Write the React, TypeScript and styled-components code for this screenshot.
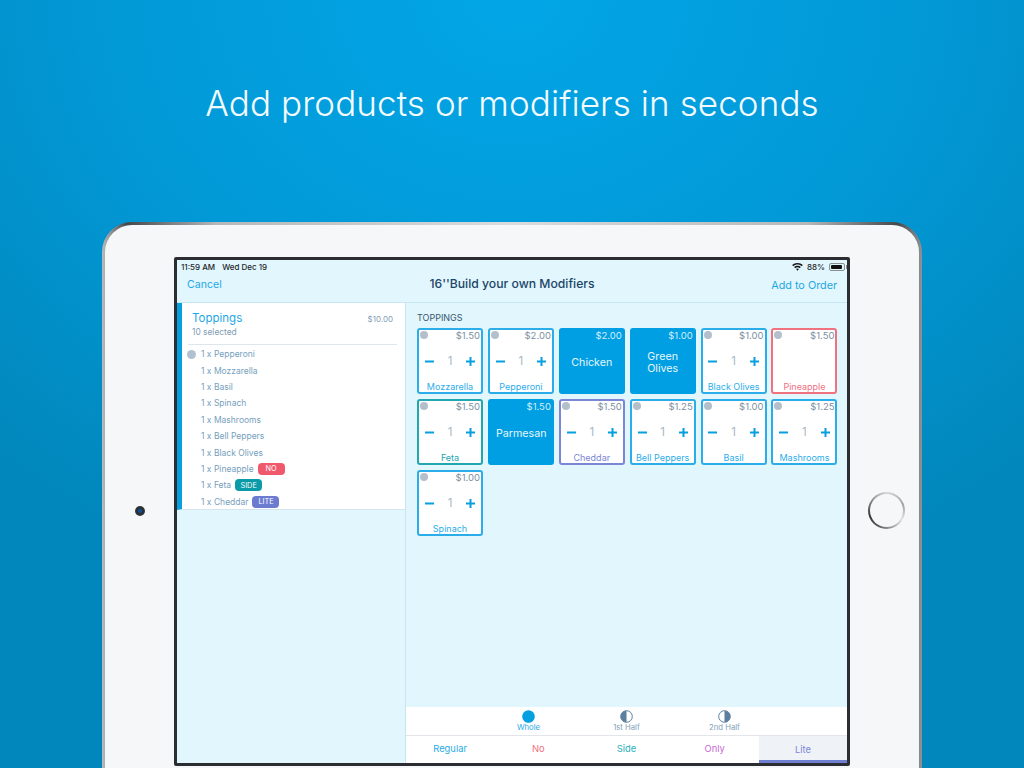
import React from 'react';
import styled, { createGlobalStyle } from 'styled-components';

const GlobalStyle = createGlobalStyle`
  html, body {
    margin: 0;
    padding: 0;
    height: 768px;
    overflow: hidden;
    font-family: Inter, "Liberation Sans", sans-serif;
  }
  * { box-sizing: border-box; }
`;

const Page = styled.div`
  width: 1024px;
  height: 768px;
  overflow: hidden;
  background: radial-gradient(ellipse 760px 620px at 50% 0, #02a6e6 0%, #0298d6 55%, #0187bb 100%);
`;

const Headline = styled.h1`
  margin: 0;
  height: 222px;
  padding-top: 80px;
  text-align: center;
  font-family: Inter, sans-serif;
  font-size: 35px;
  line-height: 46px;
  font-weight: 300;
  letter-spacing: 0.09px;
  color: #f4fbff;
`;

const DeviceEdge = styled.div`
  width: 820px;
  height: 560px;
  margin: 0 auto;
  padding: 3px 3px 0;
  border-radius: 30px 30px 0 0;
  background: linear-gradient(90deg, #b9bcbf 0, #45484b 3%, #b5b7b9 14%, #d9dbdd 50%, #b5b7b9 86%, #45484b 97%, #8f9295 100%);
`;

const DeviceBody = styled.div`
  height: 100%;
  display: grid;
  grid-template-columns: 69px 676px 69px;
  padding-top: 32px;
  border-radius: 27px 27px 0 0;
  background: #f6f7f9;
`;

const BezelSide = styled.div`
  height: 507px;
  display: flex;
  align-items: center;
  justify-content: center;
`;

const Camera = styled.div`
  width: 10px;
  height: 10px;
  margin-left: 1px;
  border-radius: 50%;
  background: radial-gradient(circle closest-side, #0d4f95 0 30%, #262a2e 55%, #3a3d40 100%);
`;

const HomeButton = styled.div`
  width: 37px;
  height: 37px;
  margin-left: 3px;
  border-radius: 50%;
  background: conic-gradient(#d8d8d8, #a0a0a0 70deg, #e2e2e2 120deg, #666 200deg, #333 250deg, #777 290deg, #d8d8d8);
  padding: 2px;
`;

const HomeInner = styled.div`
  width: 100%;
  height: 100%;
  border-radius: 50%;
  background: #f6f7f9;
`;

const Screen = styled.div`
  width: 676px;
  height: 509px;
  border: 3px solid #2b2d30;
  border-radius: 2px;
  background: #e2f6fd;
  display: flex;
  flex-direction: column;
  overflow: hidden;
`;

const StatusBar = styled.div`
  height: 14px;
  padding: 0 2px 0 4px;
  display: flex;
  justify-content: space-between;
  align-items: center;
  font-size: 8px;
  font-weight: 500;
  color: #22262a;
`;

const StatusGroup = styled.div<{ $gap: number }>`
  display: flex;
  align-items: center;
  gap: ${({ $gap }) => $gap}px;
`;

const Battery = styled.div`
  width: 16px;
  height: 8px;
  padding: 1px;
  border: 1px solid #8b8f93;
  border-radius: 2px;
  position: relative;
  &::after {
    content: '';
    position: absolute;
    right: -3px;
    top: 1px;
    width: 1px;
    height: 4px;
    background: #8b8f93;
  }
`;

const BatteryFill = styled.div`
  width: 88%;
  height: 100%;
  background: #111;
  border-radius: 1px;
`;

const NavBar = styled.div`
  height: 29px;
  padding: 0 10px 8px;
  display: grid;
  grid-template-columns: 1fr auto 1fr;
  align-items: center;
  border-bottom: 1px solid #c6e6f2;
`;

const NavLink = styled.div<{ $right?: boolean }>`
  font-size: ${({ $right }) => ($right ? '10.8px' : '10.6px')};
  color: #1ea7e6;
  text-align: ${({ $right }) => ($right ? 'right' : 'left')};
  padding-top: ${({ $right }) => ($right ? '3px' : '1px')};
`;

const NavTitle = styled.div`
  font-size: 12.2px;
  font-weight: 500;
  color: #1a4569;
  margin-top: -1px;
`;

const Columns = styled.div`
  flex: 1;
  min-height: 0;
  display: grid;
  grid-template-columns: 229px 1fr;
`;

const LeftPanel = styled.div`
  border-right: 1px solid #c6e6f2;
`;

const GroupCard = styled.div`
  height: 207px;
  padding: 8px 8px 0 6px;
  background: #fff;
  border-left: 5px solid #069fe0;
  border-bottom: 1px solid #d5e6ee;
`;

const GroupHead = styled.div`
  padding: 0 4px 6px 4px;
  display: grid;
  grid-template-columns: 1fr auto;
  border-bottom: 1px solid #dde6ed;
  margin-bottom: 1px;
`;

const GroupTitle = styled.div`
  font-size: 11.5px;
  line-height: 15px;
  color: #1ea7e6;
`;

const GroupPrice = styled.div`
  font-size: 8px;
  line-height: 17px;
  color: #7f9db5;
`;

const GroupCount = styled.div`
  font-size: 8.4px;
  line-height: 11px;
  margin-top: -1px;
  color: #7f9db5;
`;

const PickRow = styled.div`
  height: 16.4px;
  display: flex;
  align-items: center;
  gap: 4px;
  font-size: 8.5px;
  color: #76a0bd;
  position: relative;
  padding-left: 13px;
`;

const PickDot = styled.span`
  position: absolute;
  left: -1px;
  top: 4px;
  width: 9px;
  height: 9px;
  border-radius: 50%;
  background: #b0c2d1;
`;

const Badge = styled.span<{ $color: string }>`
  width: 27px;
  height: 12px;
  border-radius: 4px;
  display: inline-flex;
  align-items: center;
  justify-content: center;
  font-size: 7.3px;
  color: #fff;
  background: ${({ $color }) => $color};
`;

const RightPanel = styled.div`
  display: flex;
  flex-direction: column;
  min-height: 0;
`;

const ModifierArea = styled.div`
  flex: 1;
  padding: 8px 0 0 11px;
`;

const SectionLabel = styled.div`
  font-size: 9px;
  line-height: 13px;
  color: #36566f;
  margin-bottom: 4px;
`;

const ModifierGrid = styled.div`
  display: grid;
  grid-template-columns: repeat(6, 66px);
  grid-auto-rows: 66px;
  gap: 5px 4.9px;
`;

const ModifierCard = styled.div<{ $color: string; $filled?: boolean }>`
  border-radius: 3px;
  border: 2px solid ${({ $color, $filled }) => ($filled ? '#009fe3' : $color)};
  background: ${({ $filled }) => ($filled ? '#009fe3' : '#fff')};
  display: grid;
  grid-template-columns: minmax(0, 1fr);
  grid-template-rows: 11px 1fr 12px;
  color: ${({ $color, $filled }) => ($filled ? '#e6f6fd' : $color)};
`;

const CardTop = styled.div`
  display: flex;
  justify-content: space-between;
  padding: 1px 0 0 1px;
`;

const CardDot = styled.span`
  width: 8px;
  height: 8px;
  border-radius: 50%;
  background: #b3c0cc;
`;

const CardPrice = styled.span<{ $filled?: boolean }>`
  margin-left: auto;
  padding-right: 1px;
  font-size: 9.5px;
  line-height: 9px;
  color: ${({ $filled }) => ($filled ? '#d5eefa' : '#7d909f')};
`;

const Stepper = styled.div`
  display: grid;
  grid-template-columns: 1fr 1fr 1fr;
  align-items: center;
  justify-items: center;
  padding-top: 1px;
`;

const StepCount = styled.span`
  font-size: 11.5px;
  color: #a9b7c3;
`;

const CardName = styled.div`
  font-size: 9px;
  line-height: 12px;
  margin-top: 1px;
  text-align: center;
  white-space: nowrap;
`;

const FilledName = styled.div`
  padding: 0 6px;
  margin-top: 4px;
  font-size: 10.7px;
  line-height: 12px;
  text-align: center;
  align-self: center;
`;

const PlacementBar = styled.div`
  height: 29px;
  background: #fff;
  border-bottom: 1px solid #e2e6ea;
  display: grid;
  grid-template-columns: repeat(3, 98px);
  justify-content: center;
`;

const PlacementItem = styled.div<{ $active?: boolean }>`
  display: flex;
  flex-direction: column;
  align-items: center;
  padding-top: 3px;
  font-size: 7.7px;
  line-height: 9px;
  color: ${({ $active }) => ($active ? '#27aae6' : '#7fa2bb')};
`;

const TabBar = styled.div`
  height: 27px;
  background: #fff;
  display: grid;
  grid-template-columns: repeat(5, 1fr);
`;

const Tab = styled.div<{ $color: string; $active?: boolean }>`
  display: flex;
  align-items: center;
  justify-content: center;
  font-size: 9.4px;
  color: ${({ $color }) => $color};
  background: ${({ $active }) => ($active ? '#eff3f8' : '#fff')};
  border-bottom: 3px solid ${({ $active }) => ($active ? '#6f7fd0' : 'transparent')};
  padding-top: ${({ $active }) => ($active ? '3px' : '0')};
`;

const BLUE = '#2badea';
const RED = '#f0727f';
const TEAL = '#22a6b0';
const INDIGO = '#7b86d4';

type Modifier = {
  name: string;
  price: string;
  color?: string;
  filled?: boolean;
  noStepper?: boolean;
};

const modifiers: Modifier[] = [
  { name: 'Mozzarella', price: '$1.50' },
  { name: 'Pepperoni', price: '$2.00' },
  { name: 'Chicken', price: '$2.00', filled: true },
  { name: 'Green Olives', price: '$1.00', filled: true },
  { name: 'Black Olives', price: '$1.00' },
  { name: 'Pineapple', price: '$1.50', color: RED, noStepper: true },
  { name: 'Feta', price: '$1.50', color: TEAL },
  { name: 'Parmesan', price: '$1.50', filled: true },
  { name: 'Cheddar', price: '$1.50', color: INDIGO },
  { name: 'Bell Peppers', price: '$1.25' },
  { name: 'Basil', price: '$1.00' },
  { name: 'Mashrooms', price: '$1.25' },
  { name: 'Spinach', price: '$1.00' },
];

const picks: { name: string; badge?: string; color?: string }[] = [
  { name: 'Pepperoni' },
  { name: 'Mozzarella' },
  { name: 'Basil' },
  { name: 'Spinach' },
  { name: 'Mashrooms' },
  { name: 'Bell Peppers' },
  { name: 'Black Olives' },
  { name: 'Pineapple', badge: 'NO', color: '#f0596c' },
  { name: 'Feta', badge: 'SIDE', color: '#0a9aa8' },
  { name: 'Cheddar', badge: 'LITE', color: '#6c7bd0' },
];

const tabs = [
  { label: 'Regular', color: '#27aae6' },
  { label: 'No', color: '#f0727f' },
  { label: 'Side', color: '#1fb0bb' },
  { label: 'Only', color: '#c86ad8' },
  { label: 'Lite', color: '#7b86d4', active: true },
];

const StepIcon: React.FC<{ plus?: boolean }> = ({ plus }) => (
  <svg width="9" height="9" viewBox="0 0 9 9" fill="none" stroke="#069fe0" strokeWidth="2">
    <path d="M0 4.5h9" />
    {plus && <path d="M4.5 0v9" />}
  </svg>
);

const HalfCircle: React.FC<{ side: 'left' | 'right' }> = ({ side }) => (
  <svg width="13" height="13" viewBox="0 0 13 13">
    <circle cx="6.5" cy="6.5" r="5.8" fill="#fff" stroke="#5d7f9f" strokeWidth="1" />
    <path
      d={side === 'left' ? 'M6.5.7a5.8 5.8 0 0 0 0 11.6z' : 'M6.5.7a5.8 5.8 0 0 1 0 11.6z'}
      fill="#5d7f9f"
    />
  </svg>
);

const WifiIcon = () => (
  <svg width="11" height="8" viewBox="0 0 11 8" fill="#111">
    <path d="M5.5 0C3.4 0 1.6.8.2 2.1l1 1.1C2.3 2.1 3.8 1.5 5.5 1.5s3.2.6 4.3 1.7l1-1.1C9.4.8 7.6 0 5.5 0z" />
    <path d="M5.5 2.8c-1.3 0-2.4.5-3.3 1.3l1 1.1c.6-.6 1.4-.9 2.3-.9s1.7.3 2.3.9l1-1.1c-.9-.8-2-1.3-3.3-1.3z" />
    <path d="M5.5 5.5c-.6 0-1 .2-1.4.5l1.4 1.7 1.4-1.7c-.4-.3-.8-.5-1.4-.5z" />
  </svg>
);

const ModifierTile: React.FC<{ item: Modifier }> = ({ item }) => {
  const color = item.color ?? BLUE;
  if (item.filled) {
    return (
      <ModifierCard $color={color} $filled>
        <CardTop>
          <CardPrice $filled>{item.price}</CardPrice>
        </CardTop>
        <FilledName>{item.name}</FilledName>
      </ModifierCard>
    );
  }
  return (
    <ModifierCard $color={color}>
      <CardTop>
        <CardDot />
        <CardPrice>{item.price}</CardPrice>
      </CardTop>
      {item.noStepper ? (
        <div />
      ) : (
        <Stepper>
          <StepIcon />
          <StepCount>1</StepCount>
          <StepIcon plus />
        </Stepper>
      )}
      <CardName>{item.name}</CardName>
    </ModifierCard>
  );
};

export default function App() {
  return (
    <Page>
      <GlobalStyle />
      <Headline>Add products or modifiers in seconds</Headline>
      <DeviceEdge>
        <DeviceBody>
          <BezelSide>
            <Camera />
          </BezelSide>
          <Screen>
            <StatusBar>
              <StatusGroup $gap={7}>
                <span>11:59 AM</span>
                <span>Wed Dec 19</span>
              </StatusGroup>
              <StatusGroup $gap={4}>
                <WifiIcon />
                <span>88%</span>
                <Battery>
                  <BatteryFill />
                </Battery>
              </StatusGroup>
            </StatusBar>
            <NavBar>
              <NavLink>Cancel</NavLink>
              <NavTitle>16''Build your own Modifiers</NavTitle>
              <NavLink $right>Add to Order</NavLink>
            </NavBar>
            <Columns>
              <LeftPanel>
                <GroupCard>
                  <GroupHead>
                    <GroupTitle>Toppings</GroupTitle>
                    <GroupPrice>$10.00</GroupPrice>
                    <GroupCount>10 selected</GroupCount>
                  </GroupHead>
                  {picks.map((pick, i) => (
                    <PickRow key={pick.name}>
                      {i === 0 && <PickDot />}
                      <span>1 x {pick.name}</span>
                      {pick.badge && <Badge $color={pick.color!}>{pick.badge}</Badge>}
                    </PickRow>
                  ))}
                </GroupCard>
              </LeftPanel>
              <RightPanel>
                <ModifierArea>
                  <SectionLabel>TOPPINGS</SectionLabel>
                  <ModifierGrid>
                    {modifiers.map((item) => (
                      <ModifierTile key={item.name} item={item} />
                    ))}
                  </ModifierGrid>
                </ModifierArea>
                <PlacementBar>
                  <PlacementItem $active>
                    <svg width="13" height="13" viewBox="0 0 13 13">
                      <circle cx="6.5" cy="6.5" r="6.3" fill="#069fe0" />
                    </svg>
                    Whole
                  </PlacementItem>
                  <PlacementItem>
                    <HalfCircle side="left" />
                    1st Half
                  </PlacementItem>
                  <PlacementItem>
                    <HalfCircle side="right" />
                    2nd Half
                  </PlacementItem>
                </PlacementBar>
                <TabBar>
                  {tabs.map((tab) => (
                    <Tab key={tab.label} $color={tab.color} $active={tab.active}>
                      {tab.label}
                    </Tab>
                  ))}
                </TabBar>
              </RightPanel>
            </Columns>
          </Screen>
          <BezelSide>
            <HomeButton>
              <HomeInner />
            </HomeButton>
          </BezelSide>
        </DeviceBody>
      </DeviceEdge>
    </Page>
  );
}
